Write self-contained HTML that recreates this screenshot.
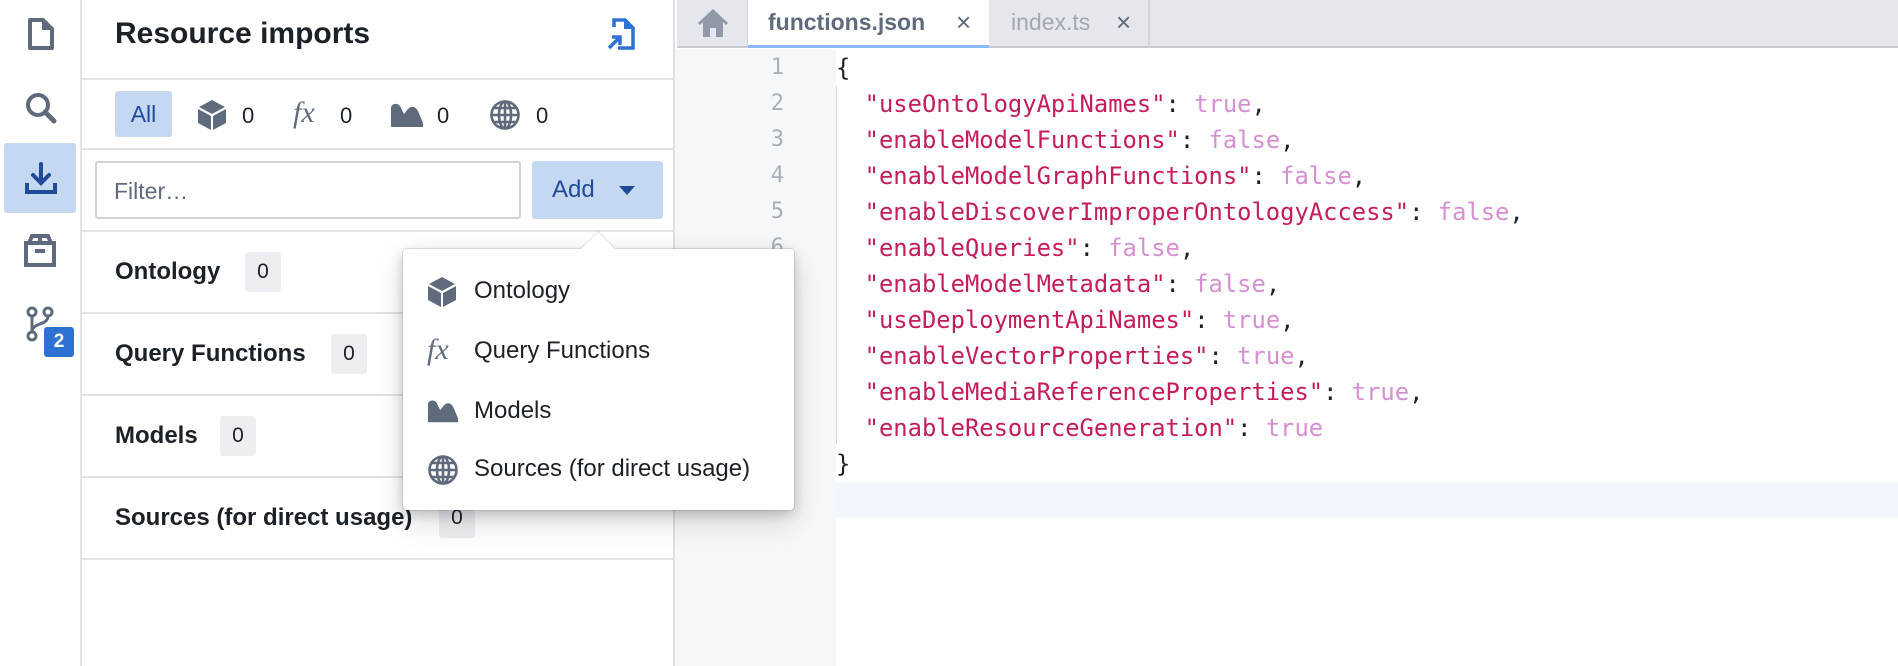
<!DOCTYPE html>
<html><head><meta charset="utf-8"><style>
*{margin:0;padding:0;box-sizing:border-box}
body{width:1898px;height:666px;overflow:hidden;background:#fff;font-family:"Liberation Sans",sans-serif;position:relative;color:#1c2127}
.a{position:absolute}
.rail{left:0;top:0;width:82px;height:666px;border-right:2px solid #e1e3e6;background:#fff}
.panel{left:82px;top:0;width:593px;height:666px;border-right:2px solid #dcdfe3}
.hl{position:absolute;left:82px;width:593px;height:2px;background:#e1e3e6}
.sec{font-weight:bold;font-size:24px;color:#1c2127}
.chip{background:#eceef1;color:#1c2127;font-size:21px;text-align:center;line-height:40px;border-radius:3px}
.num{font-size:22px;color:#1c2127}
.code{font-family:"DejaVu Sans Mono","Liberation Mono",monospace;font-size:23.8px;white-space:pre;line-height:36px}
.k{color:#c41d5a}.v{color:#d690d2}
.ln{font-family:"DejaVu Sans Mono",monospace;font-size:22px;color:#a7b0bb;text-align:right;width:60px;line-height:36px}
.mi{font-size:24px;color:#1c2127}
.x{font-size:26px;color:#5f6b7c}
</style></head><body>
<div class="a rail"></div>
<svg class="a" style="left:26px;top:17px" width="30" height="34" viewBox="0 0 30 34"><path d="M4 3h13l9 9v19H4z" fill="none" stroke="#5f6b7c" stroke-width="4" stroke-linejoin="round"/><path d="M16 3v10h10" fill="#5f6b7c"/></svg>
<svg class="a" style="left:24px;top:91px" width="34" height="34" viewBox="0 0 34 34"><circle cx="14" cy="14" r="10" fill="none" stroke="#5f6b7c" stroke-width="4"/><path d="M21 21l9 9" stroke="#5f6b7c" stroke-width="5" stroke-linecap="round"/></svg>
<div class="a" style="left:4px;top:143px;width:72px;height:70px;background:#c5d8f1;border-radius:3px"></div>
<svg class="a" style="left:24px;top:161px" width="34" height="34" viewBox="0 0 34 34"><path d="M17 3v18M9 14l8 8 8-8" fill="none" stroke="#1f4b99" stroke-width="4" stroke-linecap="round"/><path d="M3 22v9h28v-9" fill="none" stroke="#1f4b99" stroke-width="4"/></svg>
<svg class="a" style="left:23px;top:233px" width="34" height="34" viewBox="0 0 34 34"><rect x="3" y="10" width="28" height="22" fill="none" stroke="#5f6b7c" stroke-width="4"/><path d="M6 10l3-7h16l3 7M17 3v7" fill="none" stroke="#5f6b7c" stroke-width="4"/><path d="M12 18h10" stroke="#5f6b7c" stroke-width="4"/></svg>
<svg class="a" style="left:24px;top:305px" width="32" height="40" viewBox="0 0 32 40"><circle cx="8" cy="7" r="4" fill="none" stroke="#5f6b7c" stroke-width="3"/><circle cx="24" cy="7" r="4" fill="none" stroke="#5f6b7c" stroke-width="3"/><circle cx="8" cy="31" r="4" fill="none" stroke="#5f6b7c" stroke-width="3"/><path d="M8 11v16M24 11c0 10-16 6-16 16" fill="none" stroke="#5f6b7c" stroke-width="3"/></svg>
<div class="a" style="left:44px;top:327px;width:30px;height:30px;background:#2d72d2;border-radius:3px;color:#fff;font-size:19px;text-align:center;line-height:30px;font-weight:bold">2</div>

<div class="a panel"></div>
<div class="a" style="left:115px;top:17px;font-size:30px;font-weight:bold;color:#1c2127">Resource imports</div>
<svg class="a" style="left:606px;top:17px" width="30" height="34" viewBox="0 0 30 34"><path d="M8 10V3h11l8 8v20H12" fill="none" stroke="#2d72d2" stroke-width="3.5"/><path d="M18 3v9h9" fill="#2d72d2"/><path d="M3 31l11-11M6 20h8v8" fill="none" stroke="#2d72d2" stroke-width="3.5"/></svg>
<div class="hl" style="top:78px"></div>
<div class="a" style="left:115px;top:91px;width:57px;height:46px;background:#c5d8f1;border-radius:3px;color:#1f4b99;font-size:23px;text-align:center;line-height:46px">All</div>
<svg class="a" style="left:197px;top:99px" width="30" height="32" viewBox="0 0 30 32"><path d="M15 1L28 8 15 15 2 8z" fill="#5f6b7c"/><path d="M1 10l13 7v14L1 24z" fill="#5f6b7c"/><path d="M29 10l-13 7v14l13-7z" fill="#5f6b7c"/></svg>
<div class="a num" style="left:242px;top:103px">0</div>
<div class="a" style="left:293px;top:96px;font-family:'Liberation Serif',serif;font-style:italic;font-size:30px;color:#5f6b7c">fx</div>
<div class="a num" style="left:340px;top:103px">0</div>
<svg class="a" style="left:390px;top:102px" width="34" height="26" viewBox="0 0 34 26"><path d="M1 25V6c0-5 8-6 10 0l3 6 4-5c4-4 8-2 10 2l5 12v4z" fill="#5f6b7c"/></svg>
<div class="a num" style="left:437px;top:103px">0</div>
<svg class="a" style="left:489px;top:99px" width="32" height="32" viewBox="0 0 32 32"><g fill="none" stroke="#5f6b7c" stroke-width="2.6"><circle cx="16" cy="16" r="13.5"/><ellipse cx="16" cy="16" rx="6" ry="13.5"/><path d="M2.5 16h27M16 2.5v27M5 9h22M5 23h22"/></g></svg>
<div class="a num" style="left:536px;top:103px">0</div>
<div class="hl" style="top:148px"></div>
<div class="a" style="left:95px;top:161px;width:426px;height:58px;border:2px solid #cfd3d8;border-radius:3px;font-size:23px;color:#5f6b7c;padding:15px 0 0 17px">Filter…</div>
<div class="a" style="left:532px;top:161px;width:131px;height:58px;background:#c5d8f1;border-radius:3px;color:#1f4b99;font-size:24px;line-height:58px;padding-left:20px">Add<span style="position:absolute;left:87px;top:25px;border-left:8px solid transparent;border-right:8px solid transparent;border-top:9px solid #1f4b99"></span></div>
<div class="hl" style="top:230px"></div>
<div class="a sec" style="left:115px;top:258px">Ontology</div>
<div class="a chip" style="left:245px;top:252px;width:36px">0</div>
<div class="hl" style="top:312px"></div>
<div class="a sec" style="left:115px;top:340px">Query Functions</div>
<div class="a chip" style="left:331px;top:334px;width:36px">0</div>
<div class="hl" style="top:394px"></div>
<div class="a sec" style="left:115px;top:422px">Models</div>
<div class="a chip" style="left:220px;top:416px;width:36px">0</div>
<div class="hl" style="top:476px"></div>
<div class="a sec" style="left:115px;top:504px">Sources (for direct usage)</div>
<div class="a chip" style="left:439px;top:498px;width:36px">0</div>
<div class="hl" style="top:558px"></div>

<div class="a" style="left:677px;top:0;width:1221px;height:48px;background:#e5e7ec;border-bottom:2px solid #c8cacf"></div>
<div class="a" style="left:677px;top:0;width:71px;height:48px;border-right:1px solid #d3d6db"></div>
<svg class="a" style="left:697px;top:8px" width="32" height="30" viewBox="0 0 32 30"><path d="M16 1L1 15l2 2 3-3v15h7v-9h6v9h7V14l3 3 2-2z" fill="#8f99a8"/></svg>
<div class="a" style="left:748px;top:0;width:241px;height:48px;background:#fff;border-bottom:3px solid #8abbff"></div>
<div class="a" style="left:768px;top:9px;font-size:23px;font-weight:bold;color:#5f6b7c">functions.json</div>
<div class="a x" style="left:956px;top:7px">×</div>
<div class="a" style="left:989px;top:0;width:161px;height:47px;border-right:2px solid #d3d6db"></div>
<div class="a" style="left:1011px;top:9px;font-size:23px;color:#a0a8b3">index.ts</div>
<div class="a x" style="left:1116px;top:7px">×</div>
<div class="a" style="left:675px;top:49px;width:161px;height:617px;background:#f6f7f9"></div>
<div class="a" style="left:836px;top:482px;width:1062px;height:36px;background:#f2f7fd"></div>
<div class="a" style="left:836px;top:86px;width:1px;height:358px;background:#d8dbdf"></div>
<div class="a ln" style="left:724px;top:50px">1<br>2<br>3<br>4<br>5<br>6<br>7<br>8<br>9<br>10<br>11<br>12<br>13</div>
<div class="a code" style="left:836px;top:50px">{
  <span class="k">"useOntologyApiNames"</span>: <span class="v">true</span>,
  <span class="k">"enableModelFunctions"</span>: <span class="v">false</span>,
  <span class="k">"enableModelGraphFunctions"</span>: <span class="v">false</span>,
  <span class="k">"enableDiscoverImproperOntologyAccess"</span>: <span class="v">false</span>,
  <span class="k">"enableQueries"</span>: <span class="v">false</span>,
  <span class="k">"enableModelMetadata"</span>: <span class="v">false</span>,
  <span class="k">"useDeploymentApiNames"</span>: <span class="v">true</span>,
  <span class="k">"enableVectorProperties"</span>: <span class="v">true</span>,
  <span class="k">"enableMediaReferenceProperties"</span>: <span class="v">true</span>,
  <span class="k">"enableResourceGeneration"</span>: <span class="v">true</span>
}</div>

<div class="a" style="left:403px;top:249px;width:391px;height:261px;background:#fff;border-radius:4px;box-shadow:0 0 0 1px rgba(17,20,24,.1),0 4px 12px rgba(17,20,24,.2),0 12px 30px rgba(17,20,24,.15)"></div>
<div class="a" style="left:586px;top:237px;width:24px;height:24px;background:#fff;transform:rotate(45deg);box-shadow:-1px -1px 0 rgba(17,20,24,.1)"></div>
<div class="a" style="left:575px;top:250px;width:50px;height:12px;background:#fff"></div>
<svg class="a" style="left:427px;top:276px" width="30" height="32" viewBox="0 0 30 32"><path d="M15 1L28 8 15 15 2 8z" fill="#5f6b7c"/><path d="M1 10l13 7v14L1 24z" fill="#5f6b7c"/><path d="M29 10l-13 7v14l13-7z" fill="#5f6b7c"/></svg>
<div class="a mi" style="left:474px;top:277px">Ontology</div>
<div class="a" style="left:427px;top:333px;font-family:'Liberation Serif',serif;font-style:italic;font-size:30px;color:#5f6b7c">fx</div>
<div class="a mi" style="left:474px;top:337px">Query Functions</div>
<svg class="a" style="left:427px;top:398px" width="32" height="26" viewBox="0 0 34 26"><path d="M1 25V6c0-5 8-6 10 0l3 6 4-5c4-4 8-2 10 2l5 12v4z" fill="#5f6b7c"/></svg>
<div class="a mi" style="left:474px;top:397px">Models</div>
<svg class="a" style="left:427px;top:454px" width="32" height="32" viewBox="0 0 32 32"><g fill="none" stroke="#5f6b7c" stroke-width="2.6"><circle cx="16" cy="16" r="13.5"/><ellipse cx="16" cy="16" rx="6" ry="13.5"/><path d="M2.5 16h27M16 2.5v27M5 9h22M5 23h22"/></g></svg>
<div class="a mi" style="left:474px;top:455px">Sources (for direct usage)</div>
</body></html>
